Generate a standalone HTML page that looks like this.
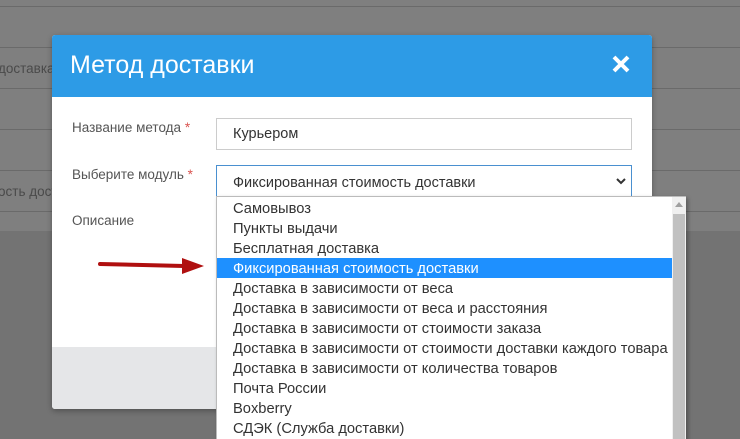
<!DOCTYPE html>
<html style="overflow:hidden;width:740px;height:439px"><head><meta charset="utf-8"><style>
*{margin:0;padding:0;box-sizing:border-box}
body{width:740px;height:439px;overflow:hidden;position:relative;font-family:"Liberation Sans","DejaVu Sans",sans-serif;background:#737373}
.bgtop{position:absolute;left:0;top:0;width:740px;height:231px;background:#7f7f7f}
.ln{position:absolute;left:0;width:740px;height:1px;background:#6a6a6a}
.bt{position:absolute;font-size:13.5px;color:#4a4a4a}
.modal{position:absolute;left:52px;top:35px;width:600px;height:374px;background:#fff;border-radius:3px;overflow:hidden;box-shadow:0 2px 6px rgba(0,0,0,.3)}
.hd{height:62px;background:#2d9be6;color:#fff;font-size:25px;padding:16px 0 0 18px}
.x{position:absolute;right:22px;top:20px}
.ft{position:absolute;left:0;top:312px;width:600px;height:62px;background:#e5e6e8}
.lab{position:absolute;font-size:13.5px;color:#555}
.lab b{color:#d9534f;font-weight:normal}
.inp{position:absolute;left:216px;width:416px;height:32px;border:1px solid #ccc;font-size:14.5px;color:#333;padding:7px 0 0 16px;background:#fff}
.dd{position:absolute;left:216px;top:196px;width:470px;height:250px;background:#fff;border:1px solid #bbb;box-shadow:2px 2px 4px rgba(0,0,0,.3);padding-top:1px}
.it{height:20px;font-size:14.7px;color:#333;padding:2px 0 0 16px;width:459px;white-space:nowrap;line-height:18px;overflow:hidden}
.sel{background:#1e90ff;color:#fff}
.sb{position:absolute;left:455px;top:0;width:14px;height:250px;background:#f0f0f0}
.th{position:absolute;left:1px;top:17px;width:12px;height:240px;background:#c1c1c1}
</style></head><body>
<div class="bgtop"></div>
<div class="ln" style="top:6px"></div><div class="ln" style="top:47px"></div><div class="ln" style="top:88px"></div><div class="ln" style="top:129px"></div><div class="ln" style="top:170px"></div><div class="ln" style="top:211px"></div>
<div class="bt" style="left:-2px;top:61px">доставка</div>
<div class="bt" style="left:-2px;top:184px">ость дост</div>
<div class="modal">
<div class="hd">Метод доставки</div>
<svg class="x" width="18" height="18" viewBox="0 0 18 18"><path d="M2 2L16 16M16 2L2 16" stroke="#fff" stroke-width="4"/></svg>
<div class="ft"></div>
</div>
<div class="lab" style="left:72px;top:120px">Название метода <b>*</b></div>
<div class="lab" style="left:72px;top:167px">Выберите модуль <b>*</b></div>
<div class="lab" style="left:72px;top:213px">Описание</div>
<div class="inp" style="top:118px">Курьером</div>
<div class="inp" style="top:165px;border-color:#4a90d0;padding-top:9px">Фиксированная стоимость доставки
<svg style="position:absolute;right:5px;top:12px" width="10" height="7" viewBox="0 0 10 7"><path d="M1 1L5 5L9 1" stroke="#333" stroke-width="2" fill="none"/></svg></div>
<div class="dd">
<div class="it">Самовывоз</div>
<div class="it">Пункты выдачи</div>
<div class="it">Бесплатная доставка</div>
<div class="it sel">Фиксированная стоимость доставки</div>
<div class="it">Доставка в зависимости от веса</div>
<div class="it">Доставка в зависимости от веса и расстояния</div>
<div class="it">Доставка в зависимости от стоимости заказа</div>
<div class="it">Доставка в зависимости от стоимости доставки каждого товара</div>
<div class="it">Доставка в зависимости от количества товаров</div>
<div class="it">Почта России</div>
<div class="it">Boxberry</div>
<div class="it">СДЭК (Служба доставки)</div>
<div class="sb"><svg style="position:absolute;left:3px;top:5px" width="8" height="5"><path d="M0 5L4 0L8 5Z" fill="#a0a0a0"/></svg><div class="th"></div></div>
</div>
<svg style="position:absolute;left:98px;top:256px" width="110" height="20" viewBox="0 0 110 20"><path d="M2 8L86 10" stroke="#b01010" stroke-width="4" stroke-linecap="round"/><path d="M84 2L106 10L84 18Z" fill="#b01010"/></svg>
</body></html>
